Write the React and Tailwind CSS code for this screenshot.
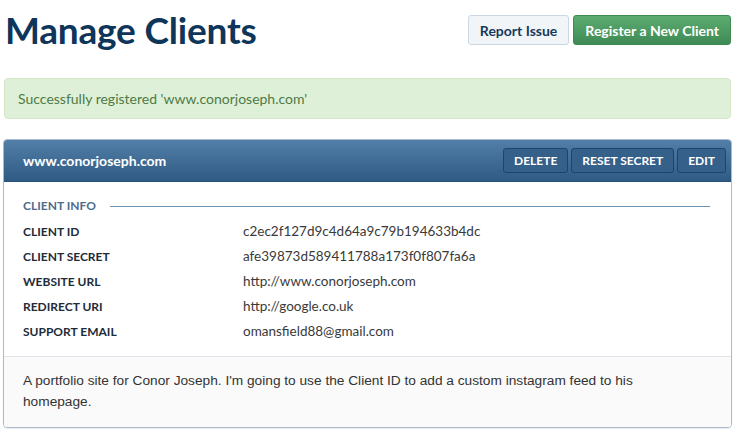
import React from "react";

const rows = [
  ["CLIENT ID", "c2ec2f127d9c4d64a9c79b194633b4dc"],
  ["CLIENT SECRET", "afe39873d589411788a173f0f807fa6a"],
  ["WEBSITE URL", "http://www.conorjoseph.com"],
  ["REDIRECT URI", "http://google.co.uk"],
  ["SUPPORT EMAIL", "omansfield88@gmail.com"],
];

export default function App() {
  return (
    <div className="w-[740px] h-[435px] bg-white overflow-hidden font-['Lato',sans-serif] text-[#333]">
      <div className="flex items-start justify-between pl-[5px] pr-[9px] pt-[15px] h-[62px]">
        <h1 className="text-[37px] font-bold text-[#0e355a] leading-[30px] tracking-[-0.2px]">Manage Clients</h1>
        <div className="flex gap-[4px]">
          <button className="h-[30px] px-[11px] rounded-[3px] border border-[#cbd8e4] bg-[#f2f5f8] text-[14px] font-bold text-[#163a5c]">Report Issue</button>
          <button className="h-[30px] px-[11px] rounded-[3px] border border-[#3d8a52] bg-gradient-to-b from-[#5cac70] to-[#3f8a55] text-[14px] font-bold text-white">Register a New Client</button>
        </div>
      </div>
      <div className="mx-[4px] mr-[9px] mt-[16px] h-[41px] rounded-[4px] border border-[#d3e8c8] bg-[#dff0d8] flex items-center px-[13px] text-[14px] text-[#4e7a45]">
        Successfully registered 'www.conorjoseph.com'
      </div>
      <div className="mx-[3px] mr-[8px] mt-[20px] rounded-[4px] border border-[#a9bccf] overflow-hidden shadow-[0_1px_1px_rgba(0,0,0,0.08)]">
        <div className="h-[42px] bg-gradient-to-b from-[#527fa8] to-[#2e5a84] flex items-center justify-between pl-[19px] pr-[5px] border-b border-[#2a5179]">
          <span className="text-[14px] font-bold text-white">www.conorjoseph.com</span>
          <div className="flex gap-[3px]">
            {["DELETE", "RESET SECRET", "EDIT"].map((t) => (
              <button key={t} className="h-[25px] px-[10px] rounded-[3px] border border-[#1f4468] bg-[#35608a] text-[12px] font-bold text-white">{t}</button>
            ))}
          </div>
        </div>
        <div className="px-[19px] pt-[17px] pb-[12px]">
          <div className="flex items-center gap-[14px] h-[14px]">
            <span className="text-[12px] font-bold text-[#4d6c8c] whitespace-nowrap">CLIENT INFO</span>
            <div className="flex-1 h-px bg-[#6f92b3] mr-[2px]"></div>
          </div>
          <div className="mt-[6px]">
            {rows.map(([k, v]) => (
              <div key={k} className="flex items-center h-[25px]">
                <span className="w-[220px] text-[12px] font-bold text-[#1e2c3a]">{k}</span>
                <span className="text-[13.5px] text-[#3a3a3a]">{v}</span>
              </div>
            ))}
          </div>
        </div>
        <div className="border-t border-[#dde3e8] bg-[#fafafa] pl-[19px] pr-[60px] pt-[13px] pb-[15px] text-[13.7px] leading-[21px] font-['Liberation_Sans',sans-serif] text-[#333]">
          A portfolio site for Conor Joseph. I'm going to use the Client ID to add a custom instagram feed to his homepage.
        </div>
      </div>
    </div>
  );
}
